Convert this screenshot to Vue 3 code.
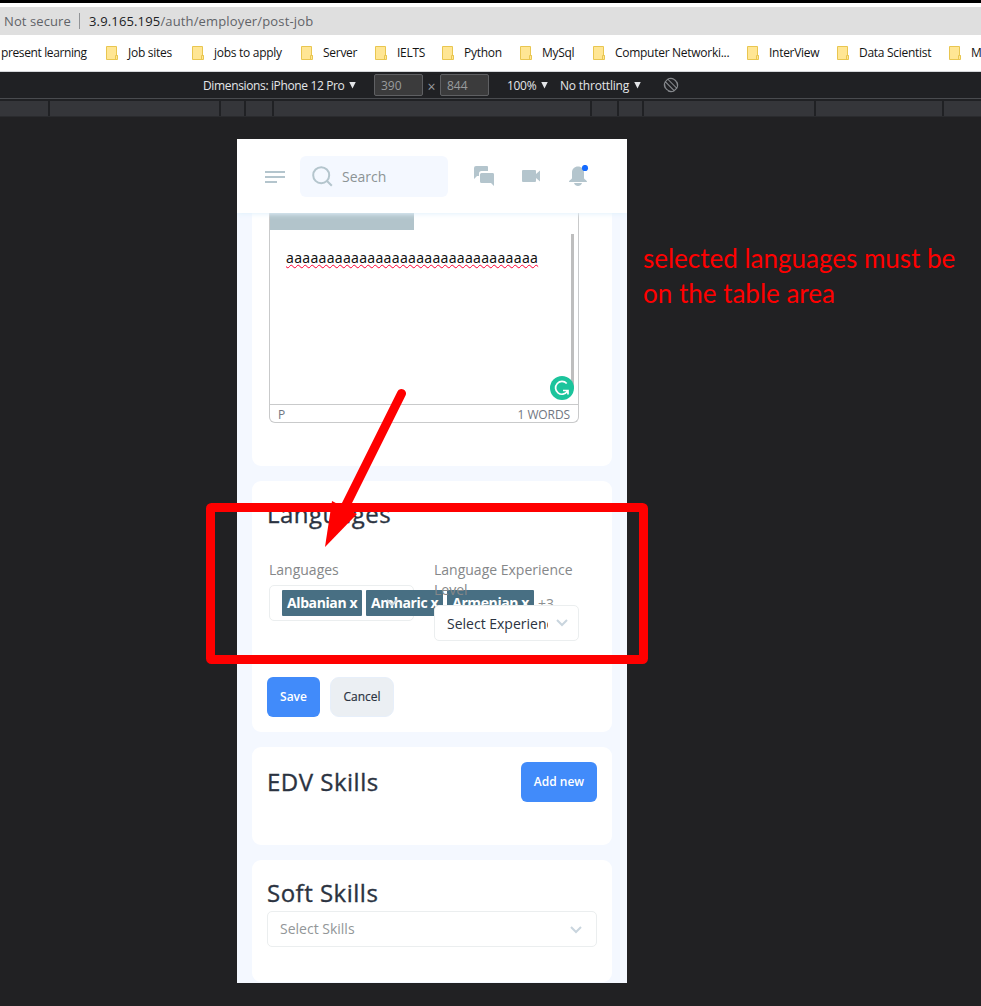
<script setup>
const bookmarks = [
  { label: 'Job sites', w: 86 },
  { label: 'jobs to apply', w: 109 },
  { label: 'Server', w: 74 },
  { label: 'IELTS', w: 67 },
  { label: 'Python', w: 78 },
  { label: 'MySql', w: 73 },
  { label: 'Computer Networki...', w: 154 },
  { label: 'InterView', w: 90 },
  { label: 'Data Scientist', w: 112 },
  { label: 'M', w: 60 },
]
const ruler = [48, 169, 23, 26, 316, 25, 23, 170, 126, 60]
const tags = ['Albanian x', 'Amharic x', 'Armenian x']
</script>

<template>
  <div class="screen">
    <div class="address">
      <span class="secure">Not secure</span><i class="bar"></i>
      <span class="url"><b>3.9.165.195</b>/auth/employer/post-job</span>
    </div>
    <nav class="bookmarks">
      <span class="first">present learning</span>
      <span v-for="b in bookmarks" :key="b.label" class="bookmark" :style="{ width: b.w + 'px' }">
        <svg width="12" height="14" viewBox="0 0 12 14">
          <path d="M.5.5h10v9h1v4H.5z" fill="#ffe694" stroke="#e9c650" />
          <path d="M9.5 13V9.5h2" fill="none" stroke="#e9c650" />
        </svg>
        <span>{{ b.label }}</span>
      </span>
    </nav>
    <div class="devtools">
      <span class="dim">Dimensions: iPhone 12 Pro</span><i class="tri"></i>
      <span class="num n1">390</span><span class="times">×</span><span class="num">844</span>
      <span class="zoom">100%</span><i class="tri t2"></i>
      <span class="throttle">No throttling</span><i class="tri t3"></i>
      <svg class="rotate" width="16" height="16" viewBox="0 0 16 16" fill="none" stroke="#85888c" stroke-width="1.1">
        <path d="M4.8 2.2 2.3 4.7l8.9 9 2.5-2.5zM1.8 7.2a6.5 6.5 0 0 0 7 7.2M7.2 1.6a6.5 6.5 0 0 1 7.1 7.2M5 2C7 .8 9 1 11 2.2M2.2 5C.9 7 1.1 9 2.2 11M13.9 5c1 2 1 4 0 6M11 14c-2 1-4 1-6 0" />
      </svg>
    </div>
    <div class="ruler"><i v-for="(w, i) in ruler" :key="i" :style="{ width: w + 'px' }"></i></div>

    <main class="phone">
      <header class="head">
        <svg class="menu" width="20" height="12" viewBox="0 0 20 12" fill="#b4c5cd">
          <path d="M0 0h20v2H0zM0 5h20v2H0zM0 10h12v2H0z" />
        </svg>
        <div class="search">
          <svg width="21" height="21" viewBox="0 0 21 21" fill="none" stroke="#b4c5cd" stroke-width="2">
            <circle cx="9.2" cy="9.2" r="8" /><path d="m14.8 14.8 5 5" />
          </svg>
          <span>Search</span>
        </div>
        <svg class="chat" width="21" height="20" viewBox="0 0 21 20" fill="#b4c5cd">
          <path d="M2 0h11q1 0 1 1v4H7.5Q5 5 5 7.5V10H3l-3 3V2Q0 0 2 0z" />
          <path d="M7.500 7H19q1 0 1 1.500V20l-3-3H7.500Q6 17 6 15.500v-7Q6 7 7.500 7z" />
        </svg>
        <svg class="video" width="18" height="12" viewBox="0 0 18 12" fill="#b4c5cd">
          <path d="M1 0h12q1 0 1 1v3l4-3.500v11L14 8v3q0 1-1 1H1q-1 0-1-1V1q0-1 1-1z" />
        </svg>
        <svg class="bell" width="21" height="22" viewBox="0 0 21 22">
          <path fill="#b4c5cd" d="M9 1.500c3.500 0 6 2.500 6 6V13c0 1.500 3 2 3 4H0c0-2 3-2.500 3-4V7.500c0-3.500 2.500-6 6-6zM5 18h8c-1 4-7 4-8 0z" />
          <circle cx="16" cy="3" r="3.100" fill="#146aff" />
        </svg>
      </header>

      <section class="card first-card">
        <div class="editor">
          <div class="chip"></div>
          <div class="typed"><span>aaaaaaaaaaaaaaaaaaaaaaaaaaaaaaa</span></div>
          <div class="thumb"></div>
          <svg class="grammar" width="24" height="24" viewBox="0 0 24 24">
            <circle cx="12" cy="12" r="12" fill="#1cc49c" />
            <path d="M16.700 7.500A6.400 6.400 0 1 0 17.300 15.400M13 14.500h5v4" fill="none" stroke="#fff" stroke-width="1.700" />
          </svg>
          <div class="status"><span>P</span><span>1 WORDS</span></div>
        </div>
      </section>

      <section class="card lang-card">
        <h2>Languages</h2>
        <div class="fields">
          <div class="field">
            <label>Languages</label>
            <div class="box multi">
              <span v-for="t in tags" :key="t" class="tag">{{ t }}</span><span class="more">+3</span>
              <svg class="chev under" width="12" height="8" viewBox="0 0 12 8"><path d="m1 1 5 5 5-5" /></svg>
            </div>
          </div>
          <div class="field over">
            <label>Language Experience Level</label>
            <div class="box">
              <span class="clip">Select Experience</span>
              <svg class="chev" width="12" height="8" viewBox="0 0 12 8"><path d="m1 1 5 5 5-5" /></svg>
            </div>
          </div>
        </div>
        <div class="actions"><button class="primary save">Save</button><button class="cancel">Cancel</button></div>
      </section>

      <section class="card edv">
        <h2>EDV Skills</h2>
        <button class="primary add">Add new</button>
      </section>

      <section class="card soft">
        <h2>Soft Skills</h2>
        <div class="box wide">
          <span>Select Skills</span>
          <svg class="chev" width="12" height="8" viewBox="0 0 12 8"><path d="m1 1 5 5 5-5" /></svg>
        </div>
      </section>
    </main>

    <p class="note">selected languages must be<br />on the table area</p>
    <svg class="marks" width="981" height="1006" viewBox="0 0 981 1006">
      <rect x="210.500" y="507.500" width="433" height="152" rx="1" fill="none" stroke="#f00" stroke-width="9" stroke-linejoin="round" />
      <path d="M401.500 393.500 346 505" stroke="#f00" stroke-width="9" stroke-linecap="round" />
      <path d="M325 547 332 501 357 514z" fill="#f00" />
    </svg>
  </div>
</template>

<style>
body { margin: 0; background: #212123; }
</style>

<style scoped>
* { box-sizing: border-box; }
.screen { position: relative; width: 981px; height: 1006px; overflow: hidden; background: #212123; font-family: "Open Sans", "Noto Sans", sans-serif; font-size: 14px; color: #2b3341; }
.screen span { white-space: nowrap; }
.address { height: 35px; border-top: 3px solid #000; background: linear-gradient(#fff 4px, #dfdfdf 4px); padding: 4px 0 0 4px; display: flex; align-items: center; font-size: 13px; color: #5f6368; }
.secure { width: 75px; letter-spacing: .1px; }
.bar { width: 1px; height: 16px; background: #929497; margin-right: 9px; }
.url { letter-spacing: .15px; }
.url b { font-weight: 400; color: #202124; }
.bookmarks { height: 37px; background: #fff; border-bottom: 1px solid #d5d7da; display: flex; align-items: center; font-size: 12px; color: #141414; letter-spacing: -.28px; padding-bottom: 1px; }
.first { width: 105px; margin-left: 1px; flex: none; letter-spacing: -.38px; }
.bookmark { display: flex; align-items: center; gap: 10px; flex: none; }
.devtools { height: 27px; background: #202124; border-bottom: 1px solid #494b4f; display: flex; align-items: center; font-size: 12px; color: #e4e6e9; padding-left: 203px; }
.dim { width: 146px; letter-spacing: -.36px; }
.tri { width: 7px; height: 7px; background: #e4e6e9; clip-path: polygon(0 0, 100% 0, 50% 100%); }
.num { width: 49px; height: 22px; border: 1px solid #5f6063; border-radius: 2px; background: #3b3b3c; color: #999b9e; line-height: 21px; padding-left: 6px; }
.n1 { margin-left: 18px; }
.times { width: 17px; text-align: center; color: #999b9e; padding-top: 2px; font-size: 14px; }
.zoom { margin-left: 18px; width: 34px; letter-spacing: -.3px; }
.throttle { margin-left: 12px; width: 74px; letter-spacing: -.2px; }
.rotate { margin-left: 22px; }
.ruler { height: 18px; padding-top: 2px; background: #202124; display: flex; gap: 2px; border-bottom: 1px solid #2a2b2e; }
.ruler i { height: 15px; background: #35363a; flex: none; }
.phone { width: 390px; height: 844px; margin: 22px 0 0 237px; background: #f4f8ff; overflow: hidden; }
.head { height: 74px; background: #fff; display: flex; align-items: center; padding-left: 28px; position: relative; box-shadow: 0 1px 5px #e2f2fc; z-index: 3; }
.menu { margin: 2px 15px 0 0; }
.search { width: 148px; height: 41px; border-radius: 6px; background: #f4f8ff; padding-left: 12px; display: flex; align-items: center; gap: 9px; color: #8c9495; margin-right: 26px; }
.chat { margin-right: 27px; }
.video { margin-right: 29px; }
.card { width: 360px; margin: 0 15px 15px; background: #fff; border-radius: 9px; padding: 15px; }
.first-card { height: 253px; padding: 0 17px; border-radius: 0 0 9px 9px; }
.editor { width: 310px; height: 210px; border: 1px solid #c9cacb; border-top: 0; border-radius: 0 0 6px 6px; position: relative; display: flex; flex-direction: column; }
.chip { width: 144px; height: 17px; background: #b2c4cb; }
.typed { flex: 1; padding: 17px 16px 0; line-height: 21px; color: #111; }
.typed span { text-decoration: underline wavy #f03 1px; text-underline-offset: 1px; text-decoration-skip-ink: none; font-family: "Noto Sans", sans-serif; letter-spacing: .28px; }
.thumb { position: absolute; right: 4px; top: 21px; width: 3px; height: 155px; background: #bebebe; }
.grammar { position: absolute; right: 4px; top: 163px; }
.status { height: 18px; border-top: 1px solid #c9cacb; display: flex; justify-content: space-between; align-items: center; padding: 1px 8px 0; font-size: 12px; color: #717681; letter-spacing: -.1px; }
h2 { margin: 0; font-size: 24px; font-weight: 400; line-height: 33px; color: #2b3341; letter-spacing: .5px; -webkit-text-stroke: .35px #2b3341; }
.lang-card { height: 251px; padding-top: 16px; }
.fields { display: flex; gap: 20px; padding: 30px 2px 0; height: 129px; }
.field { width: 145px; }
.over { position: relative; }
label { display: block; line-height: 20px; color: #858789; margin-bottom: 5px; }
.box { height: 36px; border: 1px solid #ebeeef; border-radius: 5px; display: flex; align-items: center; padding: 0 10px 0 12px; background: #fff; justify-content: space-between; }
.multi { position: relative; gap: 4px; justify-content: flex-start; padding-right: 0; }
.tag { flex: none; height: 26px; line-height: 25px; padding: 0 5px; background: #486f83; color: #fff; font-weight: 700; border-radius: 1px; letter-spacing: -.4px; }
.more { color: #8c8f91; }
.under { position: absolute; left: 116px; }
.clip { width: 101px; overflow: hidden; }
.chev { flex: none; fill: none; stroke: #c9d5de; stroke-width: 2; }
.actions { display: flex; gap: 10px; margin-top: 18px; }
button { border: 0; height: 40px; border-radius: 6px; font: 500 12px "Open Sans", sans-serif; padding: 0 0 1px; color: #2b3341; }
.primary { color: #fff; background: #418bfa; font-weight: 600; }
.save { width: 53px; }
.cancel { width: 64px; border-radius: 9px; background: #ebeff3; border: 1px solid #e7effa; -webkit-text-stroke: .2px #2b3341; }
.add { width: 76px; }
.edv { height: 98px; display: flex; justify-content: space-between; }
.edv h2 { padding-top: 3px; }
.soft { height: 122px; padding-top: 16px; }
.wide { margin-top: 2px; padding: 0 14px 1px 12px; color: #929698; }
.wide .chev { margin-top: 3px; }
.note { position: absolute; left: 643px; top: 241px; margin: 0; color: #f00; font: 26px/35px Lato, sans-serif; letter-spacing: 0; white-space: nowrap; }
.marks { position: absolute; inset: 0; }
</style>
